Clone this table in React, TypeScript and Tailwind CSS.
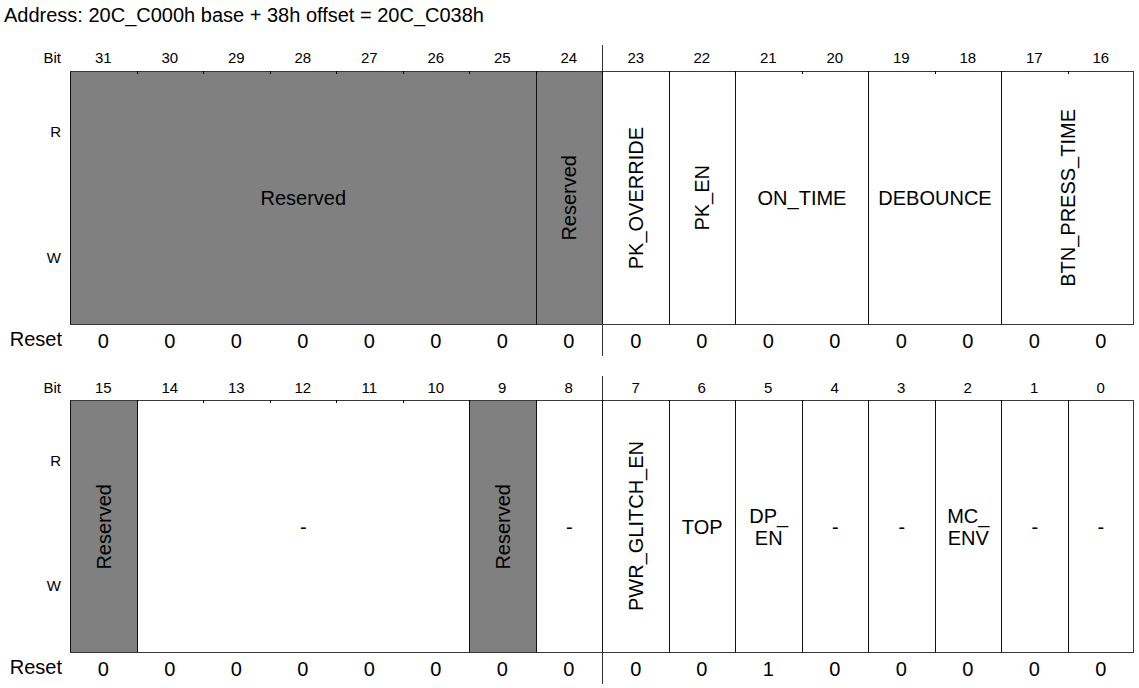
import clsx from "clsx";

type Field = {
  name: string;
  span: number;
  gray?: boolean;
  vertical?: boolean;
  lines?: string[];
};

const spanClass: Record<number, string> = {
  1: "col-span-1",
  2: "col-span-2",
  5: "col-span-5",
  7: "col-span-7",
};

const upperFields: Field[] = [
  { name: "Reserved", span: 7, gray: true },
  { name: "Reserved", span: 1, gray: true, vertical: true },
  { name: "PK_OVERRIDE", span: 1, vertical: true },
  { name: "PK_EN", span: 1, vertical: true },
  { name: "ON_TIME", span: 2 },
  { name: "DEBOUNCE", span: 2 },
  { name: "BTN_PRESS_TIME", span: 2, vertical: true },
];

const lowerFields: Field[] = [
  { name: "Reserved", span: 1, gray: true, vertical: true },
  { name: "-", span: 5 },
  { name: "Reserved", span: 1, gray: true, vertical: true },
  { name: "-", span: 1 },
  { name: "PWR_GLITCH_EN", span: 1, vertical: true },
  { name: "TOP", span: 1 },
  { name: "DP_EN", span: 1, lines: ["DP_", "EN"] },
  { name: "-", span: 1 },
  { name: "-", span: 1 },
  { name: "MC_ENV", span: 1, lines: ["MC_", "ENV"] },
  { name: "-", span: 1 },
  { name: "-", span: 1 },
];

const GRID = "grid w-[1064px] grid-cols-[repeat(16,minmax(0,1fr))]";

function FieldCell({ field, last }: { field: Field; last: boolean }) {
  return (
    <div
      className={clsx(
        spanClass[field.span],
        "flex items-center justify-center border-y border-l border-y-[#3a3a3a] border-l-[#111] text-[20px]",
        field.gray ? "bg-[#808080]" : "bg-white",
        last && "border-r border-r-[#3a3a3a]"
      )}
    >
      {field.lines ? (
        <div className="flex flex-col items-center leading-[22px]">
          {field.lines.map((l) => (
            <span key={l}>{l}</span>
          ))}
        </div>
      ) : field.vertical ? (
        <span className="rotate-180 whitespace-nowrap leading-none [writing-mode:vertical-rl]">
          {field.name}
        </span>
      ) : (
        <span className="whitespace-nowrap">{field.name}</span>
      )}
    </div>
  );
}

function RegisterBlock({
  highBit,
  fields,
  resets,
  bitHeight,
  boxHeight,
}: {
  highBit: number;
  fields: Field[];
  resets: number[];
  bitHeight: string;
  boxHeight: string;
}) {
  const bits = Array.from({ length: 16 }, (_, i) => highBit - i);

  return (
    <div className="flex flex-col">
      {/* bit numbers */}
      <div className={clsx("flex", bitHeight)}>
        <div className="flex w-[70px] items-center justify-end pr-[9px] text-[15px]">Bit</div>
        <div className={GRID}>
          {bits.map((b, i) => (
            <div
              key={b}
              className={clsx(
                "flex items-center justify-center text-[15px]",
                i === 8 && "border-l border-[#333]"
              )}
            >
              {b}
            </div>
          ))}
        </div>
      </div>

      {/* fields */}
      <div className={clsx("flex", boxHeight)}>
        <div className="flex w-[70px] flex-col text-[15px]">
          <div className="flex flex-1 items-center justify-end pr-[9px] pb-[4px]">R</div>
          <div className="flex flex-1 items-center justify-end pr-[9px] pb-[6px]">W</div>
        </div>
        <div className="relative">
          <div className={clsx(GRID, "h-full")}>
            {fields.map((f, i) => (
              <FieldCell key={i} field={f} last={i === fields.length - 1} />
            ))}
          </div>
          {/* column ticks on the top edge */}
          <div className={clsx(GRID, "pointer-events-none absolute top-0 left-0 h-[3px]")}>
            {bits.map((b, i) => (
              <div key={b} className={clsx(i > 0 && "border-l border-black")} />
            ))}
          </div>
        </div>
      </div>

      {/* reset values */}
      <div className="flex h-[28px]">
        <div className="flex w-[70px] items-center justify-end pr-[8px] text-[20px]">Reset</div>
        <div className={GRID}>
          {resets.map((r, i) => (
            <div
              key={i}
              className={clsx(
                "flex items-center justify-center pt-[1px] text-[20px]",
                i === 8 && "border-l border-[#333]"
              )}
            >
              {r}
            </div>
          ))}
        </div>
      </div>
    </div>
  );
}

export default function App() {
  return (
    <div className="h-[688px] w-[1139px] overflow-hidden bg-white font-['Liberation_Sans',Arial,sans-serif] text-black">
      <div className="h-[45px] pt-[3px] pl-[4px] text-[20px] leading-[24px]">
        Address: 20C_C000h base + 38h offset = 20C_C038h
      </div>
      <RegisterBlock
        highBit={31}
        fields={upperFields}
        resets={Array(16).fill(0)}
        bitHeight="h-[26px]"
        boxHeight="h-[254px]"
      />
      <div className="h-[23px]" />
      <RegisterBlock
        highBit={15}
        fields={lowerFields}
        resets={[0, 0, 0, 0, 0, 0, 0, 0, 0, 0, 1, 0, 0, 0, 0, 0]}
        bitHeight="h-[24px]"
        boxHeight="h-[253px]"
      />
    </div>
  );
}
